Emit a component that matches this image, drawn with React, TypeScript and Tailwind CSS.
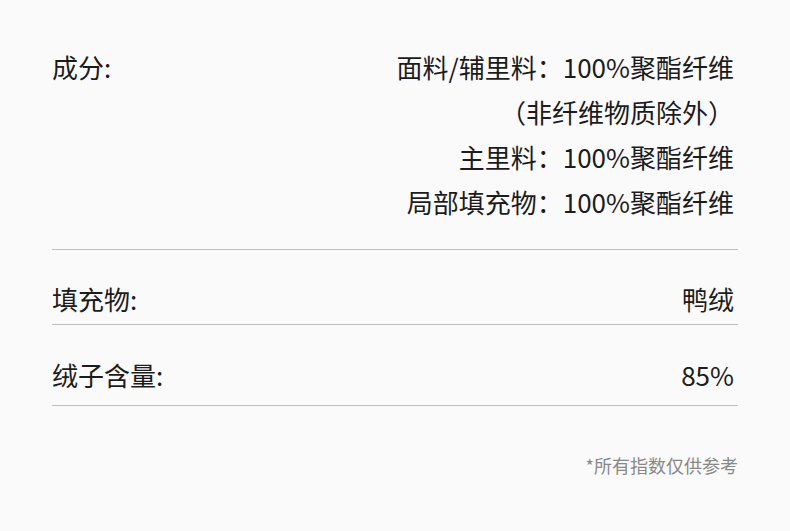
export default function App() {
  const font = { fontFamily: '"Noto Sans CJK SC", "Noto Sans", sans-serif' };
  return (
    <div className="w-[790px] h-[531px] bg-[#fafafa] text-[#1c1c1c]" style={font}>
      <div className="pl-[52px] pr-[52px]">
        <div className="flex justify-between pt-[44px] pb-[25px] border-b border-[#bdbdbd] text-[26px] leading-[45px]">
          <div>成分:</div>
          <div className="flex flex-col items-end pr-[4px]">
            <div>面料/辅里料：100%聚酯纤维</div>
            <div>（非纤维物质除外）</div>
            <div>主里料：100%聚酯纤维</div>
            <div>局部填充物：100%聚酯纤维</div>
          </div>
        </div>
        <div className="flex justify-between pt-[28px] pb-[4px] border-b border-[#bdbdbd] text-[26px] leading-[42px]">
          <div>填充物:</div>
          <div className="pr-[4px]">鸭绒</div>
        </div>
        <div className="flex justify-between pt-[29px] pb-[9px] border-b border-[#bdbdbd] text-[26px] leading-[42px]">
          <div>绒子含量:</div>
          <div className="pr-[4px]">85%</div>
        </div>
        <div className="flex justify-end pt-[47px] text-[18px] leading-[24px] text-[#888888]">
          *所有指数仅供参考
        </div>
      </div>
    </div>
  );
}
